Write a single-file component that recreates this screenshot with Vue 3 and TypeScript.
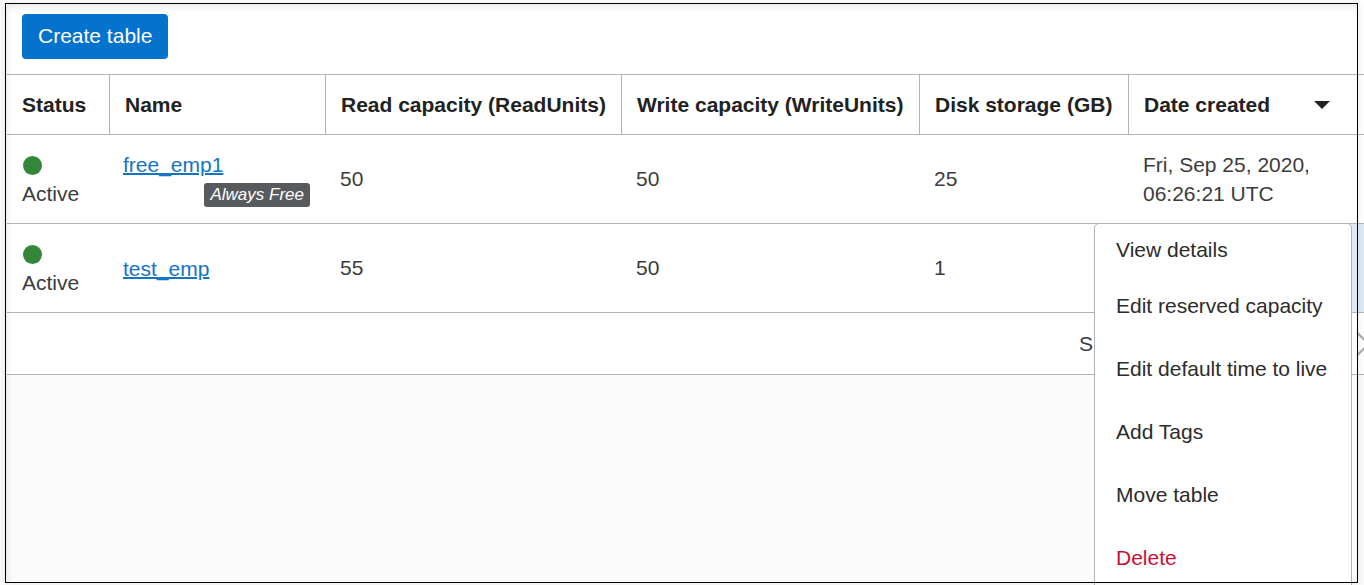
<script setup lang="ts">
interface TableRow {
  name: string
  alwaysFree: boolean
  read: number
  write: number
  storage: number
  created: string
  menuOpen: boolean
}

interface MenuAction {
  label: string
  danger?: boolean
}

const rows: TableRow[] = [
  {
    name: 'free_emp1',
    alwaysFree: true,
    read: 50,
    write: 50,
    storage: 25,
    created: 'Fri, Sep 25, 2020, 06:26:21 UTC',
    menuOpen: false,
  },
  {
    name: 'test_emp',
    alwaysFree: false,
    read: 55,
    write: 50,
    storage: 1,
    created: '',
    menuOpen: true,
  },
]

const actions: MenuAction[] = [
  { label: 'View details' },
  { label: 'Edit reserved capacity' },
  { label: 'Edit default time to live' },
  { label: 'Add Tags' },
  { label: 'Move table' },
  { label: 'Delete', danger: true },
]
</script>

<template>
  <div class="page">
    <main class="content">
      <div class="toolbar">
        <button type="button" class="create">Create table</button>
      </div>

      <table class="grid">
        <colgroup>
          <col class="c-status" />
          <col class="c-name" />
          <col class="c-read" />
          <col class="c-write" />
          <col class="c-disk" />
          <col />
          <col class="c-actions" />
        </colgroup>
        <thead>
          <tr>
            <th scope="col">Status</th>
            <th scope="col">Name</th>
            <th scope="col">Read capacity (ReadUnits)</th>
            <th scope="col">Write capacity (WriteUnits)</th>
            <th scope="col">Disk storage (GB)</th>
            <th scope="col" class="plain" aria-sort="descending">
              <button type="button" class="sort">
                Date created
                <svg width="16" height="8" viewBox="0 0 16 8" aria-hidden="true">
                  <path d="M0 0H16L8 8Z" fill="#222" />
                </svg>
              </button>
            </th>
            <td class="plain"></td>
          </tr>
        </thead>
        <tbody>
          <tr v-for="row in rows" :key="row.name">
            <td class="status">
              <div class="dot-line"><span class="dot"></span></div>
              Active
            </td>
            <td class="name-cell">
              <a href="#" class="name">{{ row.name }}</a>
              <div v-if="row.alwaysFree" class="badge-line">
                <span class="badge">Always Free</span>
              </div>
            </td>
            <td class="value">{{ row.read }}</td>
            <td class="value">{{ row.write }}</td>
            <td class="value">{{ row.storage }}</td>
            <td>{{ row.created }}</td>
            <td class="actions" :class="{ open: row.menuOpen }">
              <ul v-if="row.menuOpen" class="menu">
                <li v-for="action in actions" :key="action.label">
                  <button type="button" :class="{ danger: action.danger }">{{ action.label }}</button>
                </li>
              </ul>
            </td>
          </tr>
        </tbody>
      </table>

      <footer class="pager">
        <span>S</span>
        <button type="button" class="next" aria-label="Next page">
          <svg width="8" height="26" viewBox="0 0 8 26" aria-hidden="true">
            <path d="M1 1.5L12.5 13L1 24.5" fill="none" stroke="#aaa" stroke-width="2" />
          </svg>
        </button>
      </footer>
    </main>
    <div class="frame"></div>
  </div>
</template>

<style>
body {
  margin: 0;
}
</style>

<style scoped>
.page {
  position: relative;
  box-sizing: border-box;
  min-height: 100vh;
  padding-left: 7px;
  overflow: hidden;
  background: #fbfbfb;
  color: #3c3c3c;
  font-family: "Liberation Sans", Arial, sans-serif;
  font-size: 21px;
  line-height: 29px;
}

button {
  margin: 0;
  border: 0;
  background: none;
  color: inherit;
  font: inherit;
  cursor: pointer;
}

.toolbar {
  display: flex;
  padding: 14px 15px 15px;
  border-bottom: 1px solid #b4b4b4;
  background: #fff;
}

.create {
  padding: 7px 16px 9px;
  border-radius: 4px;
  background: #0572ce;
  color: #fff;
}

.grid {
  width: 100%;
  table-layout: fixed;
  border-collapse: separate;
  border-spacing: 0;
  background: #fff;
}

.c-status {
  width: 103px;
}

.c-name {
  width: 216px;
}

.c-read {
  width: 296px;
}

.c-write {
  width: 298px;
}

.c-disk {
  width: 209px;
}

.c-actions {
  width: 19px;
}

th {
  padding: 15px 0 15px 15px;
  border-right: 1px solid #b4b4b4;
  border-bottom: 1px solid #b4b4b4;
  color: #222;
  font-weight: bold;
  text-align: left;
  white-space: nowrap;
}

td {
  padding: 15px 16px 15px 14px;
  border-bottom: 1px solid #b4b4b4;
  vertical-align: middle;
}

td.status {
  padding-left: 15px;
}

td.name-cell {
  padding-left: 13px;
}

td.value {
  padding-top: 14px;
  padding-bottom: 16px;
}

th.plain,
td.plain {
  border-right: 0;
}

.sort {
  display: flex;
  align-items: center;
  justify-content: space-between;
  width: 100%;
  padding: 0 15px 0 0;
}

.dot-line {
  display: flex;
  align-items: flex-end;
  height: 29px;
  padding: 0 0 4px 1px;
  box-sizing: border-box;
}

.dot {
  width: 19px;
  height: 19px;
  border-radius: 50%;
  background: #34863a;
}

.name {
  color: #1474c4;
  text-decoration: underline;
  text-decoration-thickness: 2px;
}

.badge-line {
  display: flex;
  justify-content: flex-end;
  height: 29px;
  padding-top: 4px;
  box-sizing: border-box;
}

.badge {
  height: 24px;
  padding: 0 6px;
  border-radius: 3px;
  background: #585b5d;
  color: #fff;
  font-size: 17px;
  font-style: italic;
  line-height: 24px;
}

.actions {
  position: relative;
  padding: 0;
}

.actions.open {
  background: #dfebf5;
}

.menu {
  position: absolute;
  z-index: 1;
  top: -1px;
  right: 12px;
  width: 256px;
  margin: 0;
  padding: 0 0 8px;
  border: 1px solid #b0b4b8;
  border-radius: 5px;
  background: #fff;
  color: #2c2c2c;
  list-style: none;
}

.menu button {
  width: 100%;
  height: 63px;
  padding: 0 21px;
  text-align: left;
  white-space: nowrap;
}

.menu li:first-child button {
  height: 50px;
}

.menu .danger {
  color: #cb1033;
}

.pager {
  display: flex;
  align-items: center;
  justify-content: flex-end;
  gap: 263px;
  height: 61px;
  border-bottom: 1px solid #b4b4b4;
  background: #fff;
}

.next {
  display: flex;
  padding: 0;
}

.frame {
  position: absolute;
  z-index: 2;
  inset: 3px 6px 2px 5px;
  border: 1px solid #000;
  box-shadow: 0 0 8px rgba(0, 0, 0, 0.1), inset 2px 4px 6px rgba(0, 0, 0, 0.08);
  pointer-events: none;
}
</style>
